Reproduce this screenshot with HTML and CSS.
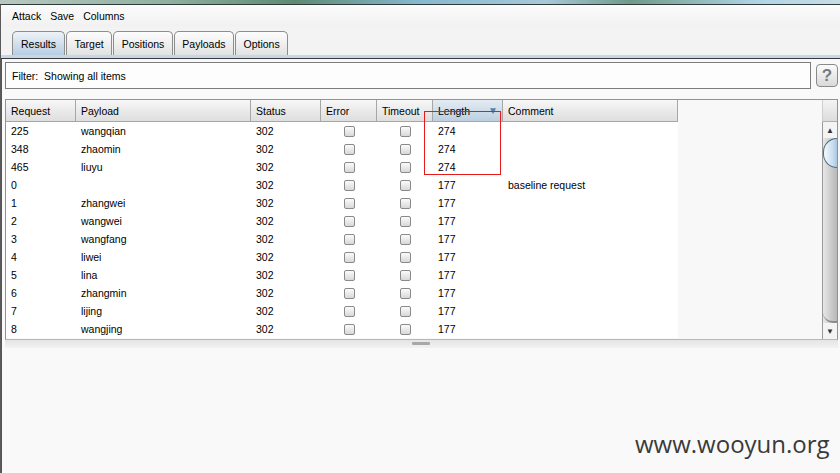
FILE: index.html
```html
<!DOCTYPE html>
<html lang="en">
<head>
    <meta charset="UTF-8">
    <meta name="viewport" content="width=device-width, initial-scale=1.0">
    <title>Intruder attack</title>
    <link rel="stylesheet" href="styles.css">
</head>
<body>
    <div class="desktop"></div>
    <div class="window">
        <div class="menubar">
            <span class="menu-item">Attack</span>
            <span class="menu-item">Save</span>
            <span class="menu-item">Columns</span>
        </div>
        <div class="tabs">
            <div class="tab selected">Results</div>
            <div class="tab">Target</div>
            <div class="tab">Positions</div>
            <div class="tab">Payloads</div>
            <div class="tab">Options</div>
        </div>
        <div class="tabline"></div>

        <div class="panel">
            <div class="filter-row">
                <div class="filter">Filter:&nbsp; Showing all items</div>
                <div class="help">?</div>
            </div>

            <div class="results">
                <div class="grid-wrap">
                    <div class="grid">
                        <div class="th">Request</div>
                        <div class="th">Payload</div>
                        <div class="th">Status</div>
                        <div class="th">Error</div>
                        <div class="th">Timeout</div>
                        <div class="th sorted">Length<span class="sort-arrow">&#9660;</span></div>
                        <div class="th">Comment</div>

                        <div class="td">225</div><div class="td">wangqian</div><div class="td">302</div><div class="td cb"><span class="check"></span></div><div class="td cb"><span class="check"></span></div><div class="td">274</div><div class="td"></div>
                        <div class="td">348</div><div class="td">zhaomin</div><div class="td">302</div><div class="td cb"><span class="check"></span></div><div class="td cb"><span class="check"></span></div><div class="td">274</div><div class="td"></div>
                        <div class="td">465</div><div class="td">liuyu</div><div class="td">302</div><div class="td cb"><span class="check"></span></div><div class="td cb"><span class="check"></span></div><div class="td">274</div><div class="td"></div>
                        <div class="td">0</div><div class="td"></div><div class="td">302</div><div class="td cb"><span class="check"></span></div><div class="td cb"><span class="check"></span></div><div class="td">177</div><div class="td">baseline request</div>
                        <div class="td">1</div><div class="td">zhangwei</div><div class="td">302</div><div class="td cb"><span class="check"></span></div><div class="td cb"><span class="check"></span></div><div class="td">177</div><div class="td"></div>
                        <div class="td">2</div><div class="td">wangwei</div><div class="td">302</div><div class="td cb"><span class="check"></span></div><div class="td cb"><span class="check"></span></div><div class="td">177</div><div class="td"></div>
                        <div class="td">3</div><div class="td">wangfang</div><div class="td">302</div><div class="td cb"><span class="check"></span></div><div class="td cb"><span class="check"></span></div><div class="td">177</div><div class="td"></div>
                        <div class="td">4</div><div class="td">liwei</div><div class="td">302</div><div class="td cb"><span class="check"></span></div><div class="td cb"><span class="check"></span></div><div class="td">177</div><div class="td"></div>
                        <div class="td">5</div><div class="td">lina</div><div class="td">302</div><div class="td cb"><span class="check"></span></div><div class="td cb"><span class="check"></span></div><div class="td">177</div><div class="td"></div>
                        <div class="td">6</div><div class="td">zhangmin</div><div class="td">302</div><div class="td cb"><span class="check"></span></div><div class="td cb"><span class="check"></span></div><div class="td">177</div><div class="td"></div>
                        <div class="td">7</div><div class="td">lijing</div><div class="td">302</div><div class="td cb"><span class="check"></span></div><div class="td cb"><span class="check"></span></div><div class="td">177</div><div class="td"></div>
                        <div class="td">8</div><div class="td">wangjing</div><div class="td">302</div><div class="td cb"><span class="check"></span></div><div class="td cb"><span class="check"></span></div><div class="td">177</div><div class="td"></div>
                    </div>
                    <!-- highlight drawn over the Length column -->
                    <div class="highlight"></div>
                </div>
                <div class="scroll-col">
                    <div class="corner"></div>
                    <div class="scrollbar">
                        <div class="arrow">&#9650;</div>
                        <div class="thumb"></div>
                        <div class="track"></div>
                        <div class="arrow">&#9660;</div>
                    </div>
                </div>
            </div>

            <div class="splitter"><span class="grip"></span></div>
            <div class="bottom-pane"></div>
        </div>
    </div>
    <div class="watermark">www.wooyun.org</div>
</body>
</html>
```

FILE: styles.css
```css
html, body {
    margin: 0;
    height: 100%;
    overflow: hidden;
}

body {
    font-family: "Liberation Sans", Arial, sans-serif;
    font-size: 10.5px;
    color: #000;
    background: #f9f9f9;
    position: relative;
}

.desktop {
    height: 4px;
    background: linear-gradient(90deg, #b8c8c0 0%, #8fb0a0 20%, #5e8a72 35%, #87b8d0 50%, #a8c8d8 65%, #6f9a88 75%, #b0d4e4 90%, #c8dce4 100%);
}

.window {
    display: flex;
    flex-direction: column;
    height: calc(100% - 4px);
    border-top: 1px solid #2e3a3a;
    border-left: 1px solid #5a5a5a;
    box-sizing: border-box;
}

.menubar {
    height: 22px;
    display: flex;
    align-items: center;
    padding-left: 11px;
    gap: 9px;
    background: linear-gradient(#fbfbfb, #f1f1f1);
}

.tabs {
    height: 28px;
    display: flex;
    align-items: flex-end;
    padding-left: 11px;
    gap: 1px;
    background: #f3f3f3;
    box-sizing: border-box;
}

.tab {
    height: 24px;
    padding: 0 7.5px;
    display: flex;
    align-items: center;
    border: 1px solid #8d8d8d;
    border-bottom: none;
    border-radius: 5px 5px 0 0;
    background: linear-gradient(#fdfdfd, #e2e2e2);
    box-sizing: border-box;
}

.tab.selected {
    padding: 0 8px;
    background: linear-gradient(#eef3f8, #b8cde1);
}

.tabline {
    height: 3px;
    background: #c6d7e8;
    border-bottom: 1px solid #3a3a3a;
}

.panel {
    flex: 1;
    display: flex;
    flex-direction: column;
    padding: 3px 2px 0 3px;
    background: #f9f9f9;
    border-left: 1px solid #555;
}

.filter-row {
    display: flex;
    align-items: center;
    gap: 5px;
    height: 27px;
    margin-bottom: 10px;
}

.filter {
    flex: 1;
    height: 27px;
    display: flex;
    align-items: center;
    padding-left: 6px;
    border: 1px solid #7c7c7c;
    background: #fdfdfd;
    box-sizing: border-box;
}

.help {
    width: 22px;
    height: 23px;
    display: flex;
    align-items: center;
    justify-content: center;
    border: 1px solid #8a8a8a;
    border-radius: 4px;
    background: linear-gradient(#fbfbfb, #d9d9d9);
    color: #7a7a7a;
    font-size: 17px;
    font-weight: bold;
    box-sizing: border-box;
}

.results {
    display: flex;
    height: 241px;
    border: 1px solid #8e949c;
    border-bottom-color: #b8b8b8;
    box-sizing: border-box;
    background: #f8f8f8;
}

.grid-wrap {
    flex: 1;
    position: relative;
}

.grid {
    display: grid;
    grid-template-columns: 70px 175px 70px 56px 56px 70px 175px;
    grid-template-rows: 22px;
    grid-auto-rows: 18px;
    width: 672px;
    background: #fff;
}

.th {
    display: flex;
    align-items: center;
    padding-left: 5px;
    border-right: 1px solid #a6a6a6;
    border-bottom: 1px solid #a6a6a6;
    background: linear-gradient(#f7f7f7, #dedede);
    box-sizing: border-box;
    position: relative;
}

.th.sorted {
    background: linear-gradient(#e4ecf3, #bccfe0);
}

.sort-arrow {
    position: absolute;
    right: 4px;
    top: 5px;
    font-size: 10px;
    color: #5b82ad;
}

.td {
    display: flex;
    align-items: center;
    padding-left: 5px;
    white-space: nowrap;
}

.td.cb {
    justify-content: center;
    padding-left: 0;
}

.check {
    width: 11px;
    height: 11px;
    border: 1px solid #8a8a8a;
    border-radius: 2px;
    background: linear-gradient(#fbfbfb, #d8d8d8);
    box-sizing: border-box;
}

.highlight {
    position: absolute;
    left: 418px;
    top: 11px;
    width: 77px;
    height: 64px;
    border: 1px solid #e8191a;
    box-sizing: border-box;
}

.scroll-col {
    width: 15px;
    display: flex;
    flex-direction: column;
}

.corner {
    height: 22px;
    border-left: 1px solid #cfcfcf;
    border-bottom: 1px solid #b0b0b0;
    background: linear-gradient(#f4f4f4, #dcdcdc);
    box-sizing: border-box;
}

.scrollbar {
    flex: 1;
    display: flex;
    flex-direction: column;
    background: linear-gradient(90deg, #e8e8e8, #cacaca 60%, #b8b8b8);
    border-left: 1px solid #9a9a9a;
}

.arrow {
    height: 16px;
    display: flex;
    align-items: center;
    justify-content: center;
    font-size: 8px;
    color: #333;
    background: #f4f4f4;
}

.thumb {
    height: 28px;
    border: 1px solid #4f6f86;
    border-radius: 14px 0 0 14px;
    border-right: none;
    background: linear-gradient(90deg, #f4f9fd, #c7dcee 70%, #a9c6de);
}

.track {
    flex: 1;
    border-radius: 0 0 0 10px;
    border-bottom: 2px solid #8e8e8e;
}

.splitter {
    height: 8px;
    display: flex;
    justify-content: center;
    align-items: flex-start;
    background: linear-gradient(#e4e4e4, #f2f2f2);
}

.grip {
    width: 18px;
    height: 3px;
    margin-top: 2px;
    margin-right: 2px;
    border-radius: 1px;
    background: #a8a8a8;
}

.bottom-pane {
    flex: 1;
    background: #f9f9f9;
}

.watermark {
    position: absolute;
    left: 635px;
    top: 427px;
    font-family: "Open Sans", sans-serif;
    font-size: 24px;
    color: #3a3a3a;
}
```
